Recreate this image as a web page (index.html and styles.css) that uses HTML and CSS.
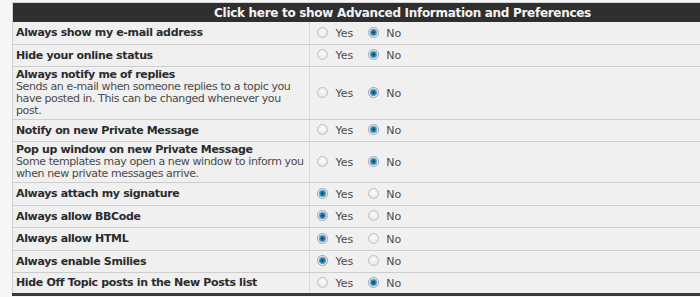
FILE: index.html
```html
<!DOCTYPE html>
<html lang="en">
  <head>
    <meta charset="utf-8">
    <title>Preferences</title>
    <link rel="stylesheet" href="styles.css">
  </head>
  <body>
    <div class="wrap">
      <table class="prefs">
        <tr>
          <th colspan="2" class="head">Click here to show Advanced Information and Preferences</th>
        </tr>
        <tr>
          <td class="name"><strong>Always show my e-mail address</strong></td>
          <td class="opts">
            <label><input type="radio" name="viewemail"> Yes</label>
            <label><input type="radio" name="viewemail" checked> No</label>
          </td>
        </tr>
        <tr>
          <td class="name"><strong>Hide your online status</strong></td>
          <td class="opts">
            <label><input type="radio" name="hideonline"> Yes</label>
            <label><input type="radio" name="hideonline" checked> No</label>
          </td>
        </tr>
        <tr>
          <td class="name"><strong>Always notify me of replies</strong><br>
            <span class="desc">Sends an e-mail when someone replies to a topic you have posted in. This can be changed whenever you post.</span></td>
          <td class="opts">
            <label><input type="radio" name="notify"> Yes</label>
            <label><input type="radio" name="notify" checked> No</label>
          </td>
        </tr>
        <tr>
          <td class="name"><strong>Notify on new Private Message</strong></td>
          <td class="opts">
            <label><input type="radio" name="notifypm"> Yes</label>
            <label><input type="radio" name="notifypm" checked> No</label>
          </td>
        </tr>
        <tr>
          <td class="name"><strong>Pop up window on new Private Message</strong><br>
            <span class="desc">Some templates may open a new window to inform you when new private messages arrive.</span></td>
          <td class="opts">
            <label><input type="radio" name="popuppm"> Yes</label>
            <label><input type="radio" name="popuppm" checked> No</label>
          </td>
        </tr>
        <tr>
          <td class="name"><strong>Always attach my signature</strong></td>
          <td class="opts">
            <label><input type="radio" name="attachsig" checked> Yes</label>
            <label><input type="radio" name="attachsig"> No</label>
          </td>
        </tr>
        <tr>
          <td class="name"><strong>Always allow BBCode</strong></td>
          <td class="opts">
            <label><input type="radio" name="allowbbcode" checked> Yes</label>
            <label><input type="radio" name="allowbbcode"> No</label>
          </td>
        </tr>
        <tr>
          <td class="name"><strong>Always allow HTML</strong></td>
          <td class="opts">
            <label><input type="radio" name="allowhtml" checked> Yes</label>
            <label><input type="radio" name="allowhtml"> No</label>
          </td>
        </tr>
        <tr>
          <td class="name"><strong>Always enable Smilies</strong></td>
          <td class="opts">
            <label><input type="radio" name="allowsmilies" checked> Yes</label>
            <label><input type="radio" name="allowsmilies"> No</label>
          </td>
        </tr>
        <tr>
          <td class="name"><strong>Hide Off Topic posts in the New Posts list</strong></td>
          <td class="opts">
            <label><input type="radio" name="hideofftopic"> Yes</label>
            <label><input type="radio" name="hideofftopic" checked> No</label>
          </td>
        </tr>
      </table>
    </div>
  </body>
</html>
```

FILE: styles.css
```css
body { margin: 0; background: #f6f6f6; font-family: "DejaVu Sans", Verdana, sans-serif; font-size: 11px; color: #333; overflow: hidden; }
.wrap { padding: 2px 0 0 12px; width: 800px; }
.prefs { width: 780px; border-collapse: collapse; border-left: 1px solid #cfcfcf; border-top: 1px solid #d6d6d6; border-bottom: 3px solid #3a3a3a; }
.head { background: #2f2f2f; color: #f4f4f4; font-size: 12px; font-weight: bold; letter-spacing: -0.3px; height: 19px; padding: 0; text-align: center; }
.prefs td { background: #f0f0f0; border-bottom: 1px solid #cdcdcd; padding: 2px 3px; line-height: 12px; height: 17px; vertical-align: middle; }
.prefs tr:nth-child(2) td, .prefs tr:nth-child(7) td, .prefs tr:nth-child(9) td { height: 18px; }
.prefs tr:last-child td { border-bottom: 0; height: 16px; }
.prefs td.name { width: 293px; padding-right: 0; border-right: 1px solid #d8d8d8; color: #333; }
.name strong { color: #2b2b2b; letter-spacing: -0.35px; }
.desc { color: #4a4a4a; letter-spacing: -0.4px; }
.opts { padding-left: 6px !important; color: #4a4a4a; white-space: nowrap; }
.opts label { margin-right: 10px; }
.opts input { appearance: none; -webkit-appearance: none; width: 11px; height: 11px; margin: 0 4px 0 1px; border-radius: 50%; vertical-align: -1px; border: 1px solid #c2c2c2; background: radial-gradient(circle at 50% 40%, #fdfdfd 0, #ebebeb 60%, #d8d8d8 100%); }
.opts input:checked { border-color: #98a6b0; background: radial-gradient(circle at 50% 50%, #0d3f5c 0, #1f6c94 1.5px, #4a9ac2 3px, #e6ecf0 4px, #d3d8dc 100%); }
```
